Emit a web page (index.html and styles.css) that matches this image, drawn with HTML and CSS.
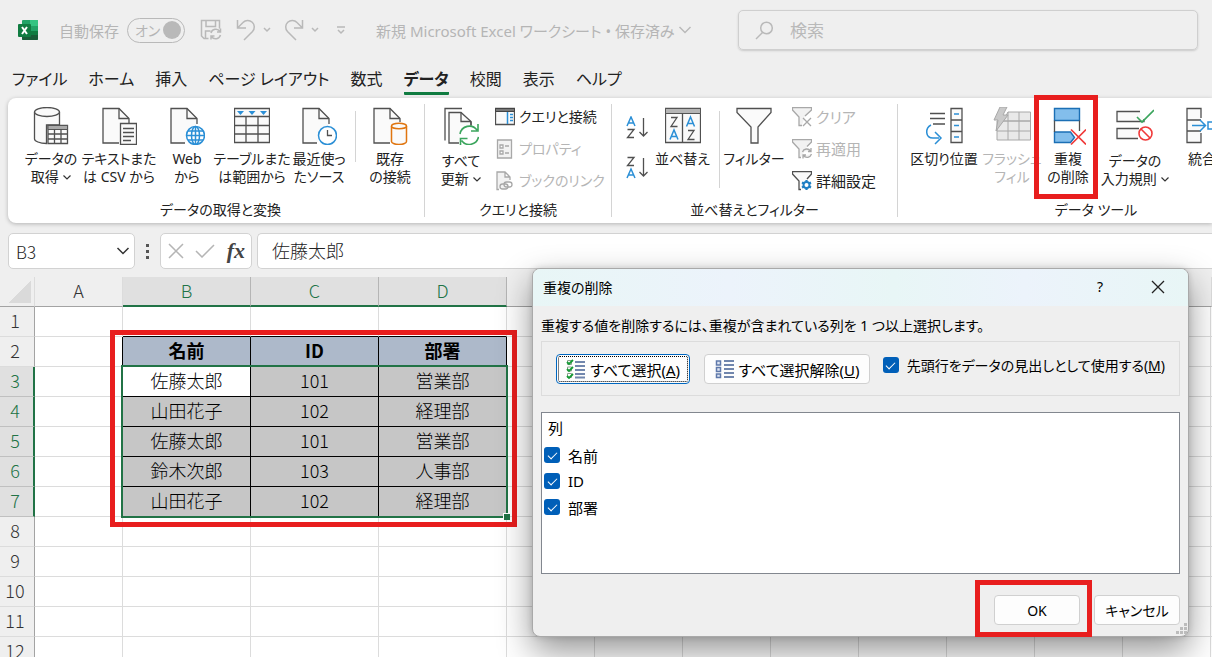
FILE: index.html
```html
<!DOCTYPE html>
<html lang="ja">
<head>
<meta charset="utf-8">
<meta name="viewport" content="width=device-width, initial-scale=1">
<title>新規 Microsoft Excel ワークシート</title>
<link rel="stylesheet" href="styles.css">
</head>
<body>
<header class="titlebar">
  <svg class="logo" width="20" height="20" viewBox="0 0 20 20" aria-hidden="true">
    <rect x="4" y="0" width="16" height="20" rx="1" fill="#21a366"/>
    <path d="M12 0h7q1 0 1 1v5h-8z" fill="#33c481"/><path d="M4 6h8v5H4z" fill="#107c41"/><path d="M12 6h8v5h-8z" fill="#21a366"/>
    <path d="M4 11h8v4H4z" fill="#185c37"/><path d="M12 11h8v4h-8z" fill="#107c41"/><path d="M4 15h16v4q0 1-1 1H5q-1 0-1-1z" fill="#185c37"/>
    <rect x="0" y="4" width="13" height="13" rx="1" fill="#107c41"/>
    <path class="logo-x" d="M4 7l5 7M9 7l-5 7"/>
  </svg>
  <label class="autosave-label" for="autosave">自動保存</label>
  <label class="toggle"><input type="checkbox" id="autosave" checked><span>オン</span></label>
  <button class="tool save" aria-label="保存"><svg width="22" height="22" viewBox="0 0 22 22"><path d="M8.500 19.500H4L1.500 17V1.500h18v8M6 1.500v6h9.500v-6M5.500 19v-7h5M11 14a5 5 0 0 1 9-1.500M20.500 9.500v3.500H17M20.500 16a5 5 0 0 1-9 1.500M11 20.500V17h3.500"/></svg></button>
  <button class="tool undo" aria-label="元に戻す"><svg width="20" height="22" viewBox="0 0 20 22"><path d="M1.500 1v8H10M1.500 9L7 3.500a6.500 6.500 0 0 1 9.500 9L8 21"/></svg></button>
  <button class="tool drop" aria-label="元に戻すの履歴"><svg width="8" height="6" viewBox="0 0 8 6"><path d="M1 1l3 3 3-3"/></svg></button>
  <button class="tool redo" aria-label="やり直し"><svg width="20" height="22" viewBox="0 0 20 22"><path d="M18.500 1v8H10M18.500 9L13 3.500a6.500 6.500 0 0 0-9.500 9L12 21"/></svg></button>
  <button class="tool drop" aria-label="やり直しの履歴"><svg width="8" height="6" viewBox="0 0 8 6"><path d="M1 1l3 3 3-3"/></svg></button>
  <button class="tool custom" aria-label="ツール バーのカスタマイズ"><svg width="10" height="9" viewBox="0 0 10 9"><path d="M1 1h8M2 4l3 3 3-3"/></svg></button>
  <button class="doc-title">新規 Microsoft Excel ワークシート • 保存済み <svg width="14" height="8" viewBox="0 0 14 8"><path d="M1.500 1L7 6.500 12.500 1"/></svg></button>
  <label class="search"><svg width="19" height="19" viewBox="0 0 19 19"><circle cx="11.500" cy="7" r="5.800"/><path d="M7.500 11.500L1 18"/></svg><input type="search" placeholder="検索" aria-label="検索"></label>
</header>

<nav class="tabs">
  <a href="#">ファイル</a><a href="#">ホーム</a><a href="#">挿入</a><a href="#">ページ レイアウト</a><a href="#">数式</a><a href="#" class="active">データ</a><a href="#">校閲</a><a href="#">表示</a><a href="#">ヘルプ</a>
</nav>

<section class="ribbon">
  <div class="group get">
    <div class="items">
      <button class="big"><svg width="36" height="38" viewBox="0 0 36 38"><path class="o" d="M1.500 5v27c0 2 5 4.500 12 4.500V18h13V5"/><ellipse class="o" cx="14" cy="5" rx="12.500" ry="4.500"/><path class="o" d="M15 18.500h19.500v18H15z"/><path fill="#aaa" stroke="#555" d="M15 18.500h19.500v4H15z"/><path class="l" d="M21.500 22v14M28 22v14M15 27h19M15 32h19"/></svg>データの<br>取得 <svg class="chev" width="8" height="5" viewBox="0 0 8 5"><path d="M.5.500L4 4 7.500.500"/></svg></button>
      <button class="big"><svg width="36" height="38" viewBox="0 0 36 38"><path class="o" d="M18 36H2V1.500h16l10 10V17"/><path class="l" d="M18 1.500v10h10"/><path class="o" d="M19.500 16.500h16v21h-16z"/><path class="l" d="M22 21.500h11M22 25.500h11M22 29.500h11M22 33.500h8"/></svg>テキストまた<br>は CSV から</button>
      <button class="big"><svg width="36" height="38" viewBox="0 0 36 38"><path class="o" d="M16 36H2V1.500h16l10 10V17"/><path class="l" d="M18 1.500v10h10"/><circle cx="26.500" cy="28.500" r="9" fill="#fff"/><g class="b"><circle cx="26.500" cy="28.500" r="9"/><ellipse cx="26.500" cy="28.500" rx="4" ry="9"/><path d="M26.500 19.500v18M17.500 28.500h18M19 24h15M19 33h15"/></g></svg>Web<br>から</button>
      <button class="big w62"><svg width="36" height="38" viewBox="0 0 36 38"><path class="o" d="M.5 1.500h35v34H.5z"/><path class="l" d="M.5 9.500h35M.5 18.500h35M.5 27h35M12 9v26M24 9v26"/><path fill="#2b8fd6" d="M3 4h7L6.500 8zM14.500 4h7L18 8zM26 4h7l-3.500 4z"/></svg>テーブルまた<br>は範囲から</button>
      <button class="big w74"><svg width="36" height="38" viewBox="0 0 36 38"><path class="o" d="M16 36H2V1.500h16l10 10V17"/><path class="l" d="M18 1.500v10h10"/><circle cx="26.500" cy="28.500" r="9" fill="#fff"/><circle class="b" cx="26.500" cy="28.500" r="9"/><path class="l" d="M26.500 23v5.500H31"/></svg>最近使っ<br>たソース</button>
      <i class="rule short"></i>
      <button class="big"><svg width="36" height="38" viewBox="0 0 36 38"><path class="o" d="M18 36H2V1.500h16l10 10V15"/><path class="l" d="M18 1.500v10h10"/><g stroke="#e0750f" stroke-width="1.500" fill="#fafafa"><path d="M19.500 19v15.500c0 1.500 3 3 7.500 3s7.500-1.500 7.500-3V19"/><ellipse cx="27" cy="19" rx="7.500" ry="2.800"/></g></svg>既存<br>の接続</button>
    </div>
    <div class="caption">データの取得と変換</div>
  </div>
  <div class="group query">
    <div class="items">
      <button class="big w70 low"><svg width="36" height="38" viewBox="0 0 36 38"><path class="l" d="M2 33.500V1.500h17"/><path class="o" d="M16 36H6V5.500h12l10 9V18"/><path class="l" d="M18 5.500v9h10"/><path fill="#fff" d="M17 19h19v19H17z"/><path class="l" d="M28 14.500V19"/><g stroke="#3ba55d" stroke-width="1.600" fill="none"><path d="M17 27a9.500 9.500 0 0 1 17-4M35 17v7h-7M35.500 30a9.500 9.500 0 0 1-17 3.500M17.500 38v-6.500h7"/></g></svg>すべて<br>更新 <svg class="chev" width="8" height="5" viewBox="0 0 8 5"><path d="M.5.500L4 4 7.500.500"/></svg></button>
      <div class="stack">
        <button><svg width="20" height="20" viewBox="0 0 20 20"><path class="o" d="M.5 1.500h19v16H.5z"/><path fill="#777" stroke="#444" d="M.5 1.500h19v3H.5z"/><path class="b" d="M12.500 5v12M15 7.500h3M15 10.500h3M15 13.500h3"/></svg>クエリと接続</button>
        <button disabled><svg width="20" height="20" viewBox="0 0 20 20"><path class="g" d="M2.500 1v18h14V1zM5 6h3v3H5zM5 12h3v3H5zM10 7h4M10 14h4"/></svg>プロパティ</button>
        <button disabled><svg width="20" height="20" viewBox="0 0 20 20"><path class="g" d="M4 18.500H2V1h8l5 5v3M10 1v5h5"/><g class="g"><rect x="5" y="13" width="8" height="5" rx="2.500"/><rect x="9" y="11" width="8" height="5" rx="2.500" fill="none"/></g></svg>ブックのリンク</button>
      </div>
    </div>
    <div class="caption">クエリと接続</div>
  </div>
  <div class="group sort">
    <div class="items">
      <div class="az">
        <button aria-label="昇順"><svg width="22" height="24" viewBox="0 0 22 24"><path class="b" d="M1 10L5 1l4 9M2.500 7h5"/><path class="l" d="M1.500 13.500H8L1.500 21.500H8M17.500 2v18M13.500 16l4 4 4-4"/></svg></button>
        <button aria-label="降順"><svg width="22" height="24" viewBox="0 0 22 24"><path class="l" d="M1.500 1.500H8L1.500 9.500H8M17.500 2v18M13.500 16l4 4 4-4"/><path class="b" d="M1 22l4-9 4 9M2.500 19h5"/></svg></button>
      </div>
      <button class="big w73"><svg width="36" height="38" viewBox="0 0 36 38"><path class="o" d="M.5 1.500h35v34H.5z"/><path fill="#b5b5b5" stroke="#555" d="M.5 1.500h35v5H.5z"/><path class="l" d="M17.500 6v30M6 10.500h6L6 19.500h6.500M23 23.500h6l-6 9h6.500"/><path class="b" d="M5 32.500l4-9.500 4 9.500M6.500 29.500h5M21.500 19.500l4-9.500 4 9.500M23 16.500h5"/></svg>並べ替え</button>
      <i class="rule tall"></i>
      <button class="big"><svg width="36" height="38" viewBox="0 0 36 38"><path class="o" d="M1 1.500h34v4L22 20v16h-7V20L1 5.500z"/></svg>フィルター</button>
      <div class="stack">
        <button disabled><svg width="20" height="20" viewBox="0 0 20 20"><path class="g" d="M10 18.500H7V10L.5 3V.500h19V3L13 9"/><path class="g" d="M11 11l8 8M19 11l-8 8"/></svg>クリア</button>
        <button disabled><svg width="20" height="20" viewBox="0 0 20 20"><path class="g" d="M9 18.500H7V10L.5 3V.500h19V3L15 7.500"/><path class="g" d="M10.500 13a4.500 4.500 0 0 1 8-1M19 9v3.500h-3M19.500 15a4.500 4.500 0 0 1-8 1.500M11 19.500V16h3"/></svg>再適用</button>
        <button><svg width="20" height="20" viewBox="0 0 20 20"><path class="o" d="M9 18.500H7V10L.5 3V.500h19V3L15 8"/><circle cx="14.500" cy="14" r="3" fill="none" stroke="#1e7fc4" stroke-width="2"/><path stroke="#1e7fc4" stroke-width="2.200" d="M14.500 9v2M14.500 17v2M10 11.500l2 1M17 15.500l2 1M10 16.500l2-1M17 12.500l2-1"/></svg>詳細設定</button>
      </div>
    </div>
    <div class="caption">並べ替えとフィルター</div>
  </div>
  <div class="group tools">
    <div class="items">
      <button class="big"><svg width="40" height="38" viewBox="0 0 40 38"><path class="o" stroke-width="2" d="M27 1.500h11v34H27zM27 13h11M27 24.500h11"/><path class="l" d="M6 6.500h15M6 11.500h15M9 17h12"/><path class="b" d="M7 18c-6 3-6 13 2 13h6M11 25l6 6-6 6M30 7h5M30 18.500h5M30 30h5"/></svg>区切り位置</button>
      <button class="big" disabled><svg width="40" height="38" viewBox="0 0 40 38"><path fill="#e9e9e9" stroke="#a8a8a8" d="M5 14h33.500v19H5zM16 5h22.500v9H11zM5 24h33.500M16 5v28M27 5v28"/><path fill="#c9c9c9" stroke="#a8a8a8" d="M8 0h7l-4 8h5L4 24l2-11H2z"/></svg>フラッシュ<br>フィル</button>
      <button class="big w44 marked"><svg width="36" height="38" viewBox="0 0 36 38"><path fill="#83beec" stroke="#1b6fb5" stroke-width="1.400" d="M4.500 1.500h25v12h-25zM4.500 25h16l4 5.500-4 5h-16z"/><path class="l" d="M4.500 13.500V25M29.500 13.500V24"/><path stroke="#f03a3a" stroke-width="1.600" d="M21 22.500l15 15M36 22.500l-15 15"/></svg>重複<br>の削除</button>
      <button class="big w90 low"><svg width="38" height="38" viewBox="0 0 38 38"><path class="o" stroke-width="1.600" d="M24 4.500H1v10h27V12M23 21.500H1v10h21"/><path d="M21 10l5 5L38 3" fill="none" stroke="#3ba55d" stroke-width="1.600"/><g stroke="#f03a3a" stroke-width="1.600" fill="#fff"><circle cx="29.500" cy="26.500" r="6.500"/><path d="M25 22l9 9"/></g></svg>データの<br>入力規則 <svg class="chev" width="8" height="5" viewBox="0 0 8 5"><path d="M.5.500L4 4 7.500.500"/></svg></button>
      <button class="big w44"><svg width="32" height="38" viewBox="0 0 32 38"><path class="o" stroke-width="1.600" d="M15 11V1.500H1v34h14V26M1 13h14M1 24h14"/><path class="b" stroke-width="1.600" d="M6 18.500h13M14 13l5.500 5.500L14 24M22 15h8v7h-8z"/></svg>統合</button>
    </div>
    <div class="caption">データ ツール</div>
  </div>
</section>

<section class="formula-bar">
  <div class="name-box"><input value="B3" aria-label="名前ボックス"><button aria-label="名前の一覧"><svg width="14" height="8" viewBox="0 0 14 8"><path d="M1.500 1L7 6.500 12.500 1"/></svg></button></div>
  <span class="dots"><i></i><i></i><i></i></span>
  <div class="fx">
    <button aria-label="キャンセル"><svg width="16" height="16" viewBox="0 0 16 16"><path d="M1 1l14 14M15 1L1 15"/></svg></button>
    <button aria-label="入力"><svg width="20" height="14" viewBox="0 0 20 14"><path d="M1 7l6 6L19 1"/></svg></button>
    <button class="fn">fx</button>
  </div>
  <input class="formula" value="佐藤太郎" aria-label="数式バー">
</section>

<main class="sheet">
  <table class="grid">
    <colgroup><col class="c-num"><col class="c-a"><col class="c-b"><col class="c-b"><col class="c-b"><col></colgroup>
    <thead><tr><th class="corner"></th><th>A</th><th class="on">B</th><th class="on">C</th><th class="on">D</th><th></th></tr></thead>
    <tbody>
      <tr class="above"><th>1</th><td></td><td></td><td></td><td></td><td class="rest"></td></tr>
      <tr class="head"><th>2</th><td class="edge"></td><td>名前</td><td>ID</td><td>部署</td><td class="rest"></td></tr>
      <tr class="sel"><th>3</th><td class="edge"></td><td class="cursor">佐藤太郎</td><td>101</td><td>営業部</td><td class="rest"></td></tr>
      <tr class="sel"><th>4</th><td class="edge"></td><td>山田花子</td><td>102</td><td>経理部</td><td class="rest"></td></tr>
      <tr class="sel"><th>5</th><td class="edge"></td><td>佐藤太郎</td><td>101</td><td>営業部</td><td class="rest"></td></tr>
      <tr class="sel"><th>6</th><td class="edge"></td><td>鈴木次郎</td><td>103</td><td>人事部</td><td class="rest"></td></tr>
      <tr class="sel"><th>7</th><td class="edge"></td><td>山田花子</td><td>102</td><td>経理部</td><td class="rest"></td></tr>
      <tr><th>8</th><td></td><td></td><td></td><td></td><td class="rest"></td></tr>
      <tr><th>9</th><td></td><td></td><td></td><td></td><td class="rest"></td></tr>
      <tr><th>10</th><td></td><td></td><td></td><td></td><td class="rest"></td></tr>
      <tr><th>11</th><td></td><td></td><td></td><td></td><td class="rest"></td></tr>
      <tr><th>12</th><td></td><td></td><td></td><td></td><td class="rest"></td></tr>
    </tbody>
  </table>
  <div class="selection"></div>
  <div class="table-mark"></div>
</main>

<div class="dialog" role="dialog" aria-labelledby="dlg-title">
  <div class="dlg-bar">
    <h1 id="dlg-title">重複の削除</h1>
    <button class="help" aria-label="ヘルプ">?</button>
    <button class="close" aria-label="閉じる"><svg width="14" height="14" viewBox="0 0 14 14"><path d="M1 1l12 12M13 1L1 13"/></svg></button>
  </div>
  <div class="dlg-body">
    <p>重複する値を削除するには、重複が含まれている列を 1 つ以上選択します。</p>
    <div class="options">
      <button class="btn all"><svg width="20" height="20" viewBox="0 0 20 20"><path stroke="#7186ad" stroke-width="2" d="M9 3h10M9 7h10M9 11h10M9 15h10M9 18.500h10"/><path fill="#fff" stroke="#8aa08f" d="M1.500 1.500h4v4h-4zM1.500 8h4v4h-4zM1.500 14.500h4v4h-4z"/><path fill="none" stroke="#159a35" stroke-width="1.800" d="M1 3l2 2 4-4M1 10l2 2 4-4M1 17l2 2 4-4"/></svg><span>すべて選択(<u>A</u>)</span></button>
      <button class="btn none"><svg width="20" height="20" viewBox="0 0 20 20"><path stroke="#7186ad" stroke-width="2" d="M9 2h10M9 6h10M9 10h10M9 14h10M9 18h10"/><path fill="#dfe6f3" stroke="#5f79ab" stroke-width="1.500" d="M1.500 2h4v4h-4zM1.500 8.500h4v4h-4zM1.500 15h4v3.500h-4z"/></svg><span>すべて選択解除(<u>U</u>)</span></button>
      <label class="check"><input type="checkbox" checked><span>先頭行をデータの見出しとして使用する(<u>M</u>)</span></label>
    </div>
    <div class="list">
      <div class="list-head">列</div>
      <label class="check"><input type="checkbox" checked>名前</label>
      <label class="check"><input type="checkbox" checked>ID</label>
      <label class="check"><input type="checkbox" checked>部署</label>
    </div>
    <div class="actions">
      <button class="btn ok">OK</button>
      <button class="btn">キャンセル</button>
    </div>
  </div>
  <svg class="grip" width="12" height="12" viewBox="0 0 12 12"><path fill="#bcbcbc" d="M9 0h3v3H9zM5 4h3v3H5zM9 4h3v3H9zM1 8h3v3H1zM5 8h3v3H5zM9 8h3v3H9z"/></svg>
</div>
</body>
</html>
```

FILE: styles.css
```css
*, *::after { box-sizing: border-box; }

body {
  margin: 0;
  height: 100vh;
  overflow: hidden;
  display: flex;
  flex-direction: column;
  position: relative;
  background: #efefef;
  color: #222;
  font-family: "Noto Sans", "Noto Sans CJK JP", sans-serif;
  font-size: 14px;
  font-feature-settings: "palt";
}

button, input {
  font: inherit;
  font-feature-settings: inherit;
  color: inherit;
  border: 0;
  padding: 0;
  margin: 0;
  background: none;
}

svg { flex: none; fill: none; }

/* icon strokes */
.o { fill: #fafafa; stroke: #505050; }
.l { fill: none; stroke: #505050; }
.b { fill: none; stroke: #2b8fd6; stroke-width: 1.5; }
.g { fill: #f2f2f2; stroke: #a8a8a8; }
.l, .o, .g { stroke-width: 1.3; }

/* title bar */
.titlebar {
  height: 60px;
  flex: none;
  display: flex;
  align-items: center;
  padding: 0 14px 0 18px;
  color: #b5b5b5;
}
.titlebar svg { stroke: #b9b9b9; stroke-width: 1.5; }
.titlebar .logo { stroke: none; }
.titlebar .logo-x { stroke: #fff; stroke-width: 2; }
.autosave-label { width: 68px; margin-left: 21px; font-size: 15px; white-space: nowrap; }
.toggle {
  width: 58px;
  height: 25px;
  display: flex;
  flex-direction: row-reverse;
  align-items: center;
  justify-content: space-between;
  padding: 0 3px 0 7px;
  border: 1px solid #b9b9b9;
  border-radius: 13px;
  white-space: nowrap;
}
.toggle input {
  appearance: none;
  width: 18px;
  height: 18px;
  border-radius: 9px;
  background: #b9b9b9;
}
.tool { display: flex; align-items: center; justify-content: center; }
.save { margin-left: 15px; }
.undo { margin-left: 14px; }
.redo { margin-left: 13px; }
.drop { margin-left: 7px; }
.custom { margin-left: 17px; }
.doc-title {
  margin-left: 30px;
  width: 316px;
  display: flex;
  align-items: center;
  justify-content: space-between;
  font-size: 15px;
  white-space: nowrap;
}
.search {
  flex: 1;
  height: 40px;
  margin-left: 46px;
  display: flex;
  align-items: center;
  gap: 16px;
  padding: 0 16px;
  border: 1px solid #cfcfcf;
  border-radius: 5px;
  box-shadow: 0 1px 2px #c9c9c9;
  font-size: 17px;
}
.search input { flex: 1; min-width: 0; outline: 0; }
.search input::placeholder { color: #b9b9b9; opacity: 1; }

/* tabs */
.tabs {
  height: 38px;
  flex: none;
  display: flex;
  gap: 21px;
  padding: 6px 12px 3px;
  font-size: 16px;
}
.tabs a {
  color: #222;
  text-decoration: none;
  white-space: nowrap;
  line-height: 26px;
}
.tabs .active { font-weight: 700; border-bottom: 3px solid #107c41; border-radius: 1px; }

/* ribbon */
.ribbon {
  height: 125px;
  flex: none;
  display: flex;
  margin-left: 8px;
  background: #fff;
  border-radius: 8px 0 0 8px;
  box-shadow: 0 1px 4px rgba(0, 0, 0, .25);
}
.group {
  flex: none;
  display: flex;
  flex-direction: column;
  justify-content: space-between;
  margin: 6px 0;
  border-right: 1px solid #d4d4d4;
}
.get { width: 417px; padding-left: 9px; }
.query { width: 187px; }
.sort { width: 286px; padding-left: 14px; }
.tools { width: 396px; padding-left: 12px; border: 0; }
.items { display: flex; align-items: flex-start; }
.caption { text-align: center; line-height: 14px; white-space: nowrap; }
.tools .caption { margin-left: -12px; }
.sort .caption { margin-left: -14px; }
.big {
  width: 76px;
  margin: 0 -4px;
  flex: none;
  position: relative;
  padding-top: 3px;
  line-height: 18px;
  text-align: center;
  white-space: nowrap;
}
.big svg:first-child { display: block; margin: 0 auto 5px; }
.big.low svg:first-child { margin-bottom: 7px; }
.w62 { width: 78px; margin: 0 -8px; }
.w70 { width: 72px; margin: 0 -2px 0 0; }
.w73 { width: 73px; margin: 0; }
.w74 { width: 72px; margin: 0; }
.w90 { width: 90px; margin: 0; }
.w44 { width: 44px; margin: 0; }
.chev { stroke: #333; stroke-width: 1.2; vertical-align: 2px; margin-left: 1px; }
.rule { flex: none; width: 1px; background: #d4d4d4; margin-top: 7px; }
.short { height: 51px; }
.tall { height: 77px; }
.stack { display: grid; gap: 10px; padding-top: 2px; }
.sort .stack { margin-left: 4px; font-size: 15px; }
.stack button {
  height: 22px;
  display: flex;
  align-items: center;
  gap: 4px;
  line-height: 22px;
  white-space: nowrap;
}
button:disabled { color: #b5b5b5; }
.az { width: 20px; display: grid; gap: 16px; padding-top: 12px; }
.az button { height: 24px; }
.marked::after {
  content: "";
  position: absolute;
  inset: -9px -8px auto -12px;
  height: 104px;
  border: 5px solid #e81e1e;
}

/* formula bar */
.formula-bar {
  flex: none;
  height: 36px;
  margin: 10px 0 8px 8px;
  display: flex;
  align-items: stretch;
}
.name-box, .fx, .formula {
  display: flex;
  align-items: center;
  background: #fff;
  border: 1px solid #d2d2d2;
  border-radius: 5px;
}
.name-box { width: 127px; padding: 0 4px 0 7px; font-size: 17px; font-family: "Noto Sans CJK JP", sans-serif; font-weight: 300; }
.name-box input { flex: 1; min-width: 0; }
.name-box svg { display: block; stroke: #333; stroke-width: 1.5; }
.dots { width: 25px; display: grid; gap: 3px; align-content: center; justify-content: center; }
.dots i { width: 3px; height: 3px; background: #555; }
.fx { width: 92px; padding: 0 6px 0 7px; justify-content: space-between; }
.fx svg { display: block; stroke: #b5b5b5; stroke-width: 1.5; }
.fn { font: italic 700 22px/30px "Liberation Serif", serif; color: #444; }
.formula {
  flex: 1;
  min-width: 0;
  margin-left: 5px;
  padding: 0 0 3px 14px;
  border-right: 0;
  border-radius: 5px 0 0 5px;
  font-family: "Noto Sans CJK JP", sans-serif;
  font-size: 18px;
  font-weight: 300;
}

/* worksheet */
.sheet { flex: 1; min-height: 0; position: relative; overflow: hidden; background: #fff; }
.grid {
  width: 100%;
  table-layout: fixed;
  border-collapse: separate;
  border-spacing: 0;
  font-family: "Noto Sans CJK JP", sans-serif;
  font-size: 18px;
  font-weight: 300;
  line-height: 20px;
  text-align: center;
}
.c-num { width: 35px; }
.c-a { width: 88px; }
.c-b { width: 128px; }
.grid th, .grid td {
  height: 30px;
  padding: 0 0 3px;
  border: solid #dcdcdc;
  border-width: 0 1px 1px 0;
  font-weight: 300;
  white-space: nowrap;
}
.grid thead th { background: #efefef; border-bottom-color: #a3a3a3; color: #333; }
.grid tbody th { background: #efefef; border-right-color: #a3a3a3; color: #333; padding-right: 4px; }
.grid thead .on { background: #e0e0e0; border-right-color: #b5b5b5; border-bottom: 2px solid #217346; color: #217346; padding-bottom: 2px; }
.grid thead .corner { background: linear-gradient(135deg, #efefef 50%, #dadada 50%) 9px 4px / 22px 22px no-repeat #efefef; }
.grid .sel th { background: #e0e0e0; border-bottom-color: #c0c0c0; border-right: 2px solid #217346; color: #217346; padding-right: 3px; }
.above td:nth-child(n+3):nth-child(-n+5) { border-bottom-color: #000; }
.grid .edge { border-right-color: #000; }
.head td:nth-child(n+3):nth-child(-n+5) { background: #adb9ca; border-color: #000; color: #000; font-weight: 700; }
.sel td:nth-child(n+3):nth-child(-n+5) { background: #c6c6c6; border-color: #000; color: #000; }
.grid .sel td.cursor:nth-child(3) { background: #fff; }
.grid .rest {
  border-right: 0;
  background: repeating-linear-gradient(to right, transparent 0 87px, #dcdcdc 87px 88px);
}
.selection {
  position: absolute;
  left: 121px;
  top: 88px;
  width: 387px;
  height: 153px;
  border: 2px solid #217346;
}
.selection::after {
  content: "";
  position: absolute;
  right: -4px;
  bottom: -4px;
  width: 7px;
  height: 7px;
  background: #217346;
  border: solid #fff;
  border-width: 1px 0 0 1px;
}
.table-mark {
  position: absolute;
  left: 110px;
  top: 53px;
  width: 407px;
  height: 197px;
  border: 5px solid #e81e1e;
}

/* dialog window */
.dialog {
  position: absolute;
  left: 532px;
  top: 268px;
  width: 657px;
  border: 1px solid #a9a9a9;
  border-radius: 8px;
  background: #efefef;
  color: #000;
  box-shadow: 0 14px 34px rgba(0, 0, 0, .42), 0 0 6px rgba(0, 0, 0, .15);
}
.dlg-bar {
  height: 37px;
  display: flex;
  align-items: center;
  padding: 0 1px 2px 10px;
  border-radius: 7px 7px 0 0;
  background: linear-gradient(to right, #e8f6f6, #ecf3fb 30%, #e8f6f6 55%, #ecf3fb 75%, #e8f6f6);
}
.dlg-bar h1 { flex: 1; margin: 0; font-size: 14px; font-weight: 400; }
.help { width: 58px; }
.close { width: 58px; }
.close svg { display: block; margin: 0 auto; stroke: #222; stroke-width: 1.3; }
.dlg-body { padding: 10px 8px 11px; }
.dlg-body p { margin: 0 0 5px; line-height: 20px; white-space: nowrap; }
.options {
  height: 55px;
  display: flex;
  align-items: flex-start;
  padding: 12px 14px;
  border: 1px solid #dcdcdc;
}
.btn {
  height: 30px;
  display: flex;
  align-items: center;
  justify-content: center;
  gap: 4px;
  background: #fdfdfd;
  border: 1px solid #d0d0d0;
  border-radius: 4px;
  white-space: nowrap;
}
.options .btn { font-size: 15px; }
.all {
  width: 135px;
  border-color: #0067c0;
  outline: 1px dotted #000;
  outline-offset: -3px;
}
.none { width: 166px; margin-left: 14px; }
.check { display: flex; align-items: center; gap: 8px; white-space: nowrap; }
.check input {
  appearance: none;
  flex: none;
  width: 16px;
  height: 16px;
  border-radius: 3px;
  background: #005fb8;
  display: grid;
  place-content: center;
}
.check input::after {
  content: "";
  width: 9px;
  height: 5px;
  margin-bottom: 2px;
  border: solid #fff;
  border-width: 0 0 1px 1px;
  rotate: -45deg;
}
.options .check { margin-left: 13px; height: 22px; }
.list {
  height: 162px;
  margin: 16px 0 21px;
  padding: 4px 2px;
  background: #fff;
  border: 1px solid #82878f;
  font-size: 15px;
}
.list-head { padding: 0 0 3px 4px; line-height: 22px; }
.list .check { height: 26px; }
.actions { display: flex; justify-content: flex-end; gap: 14px; }
.actions .btn { width: 86px; position: relative; }
.ok::after {
  content: "";
  position: absolute;
  inset: -16px -13px -13px -20px;
  border: 5px solid #e81e1e;
}
.grip { position: absolute; right: 1px; bottom: 1px; }
```
